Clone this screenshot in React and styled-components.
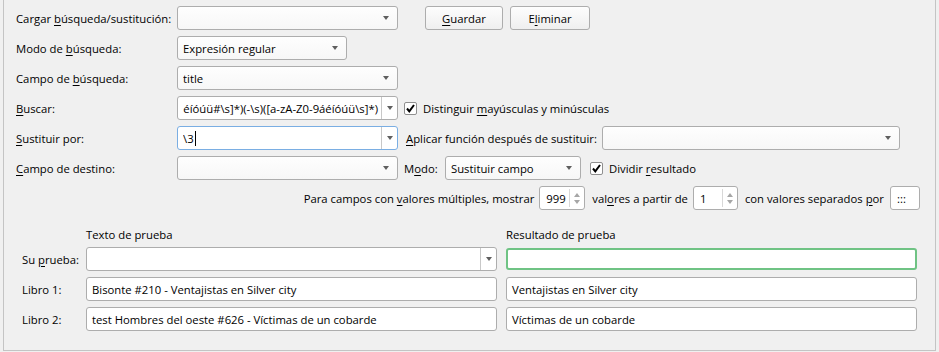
import React from 'react';
import styled, { createGlobalStyle } from 'styled-components';

const GlobalStyle = createGlobalStyle`
  html, body {
    margin: 0;
    padding: 0;
    background: #f0f0f0;
  }
  body {
    font-family: "Open Sans", "Noto Sans", sans-serif;
    font-size: 11.3px;
    color: #000;
  }
`

const Panel = styled.div`
  box-sizing: border-box;
  margin-left: 3px;
  width: 933px;
  height: 351px;
  border: 1px solid #c4c4c4;
  border-top: 0;
  padding: 6px 15px 0 12px;
`

const Row = styled.div`
  display: flex;
  align-items: center;
  height: 24px;
  margin-bottom: 6px;
  justify-content: ${props => props.right ? 'flex-end' : 'flex-start'};
`

const Label = styled.span`
  flex: none;
  width: ${props => props.w ? `${props.w}px` : 'auto'};
  margin-left: ${props => props.ml || 0}px;
  white-space: nowrap;
`

const Combo = styled.div`
  position: relative;
  flex: none;
  box-sizing: border-box;
  width: ${props => props.w ? `${props.w}px` : 'auto'};
  height: 24px;
  margin-left: ${props => props.ml || 0}px;
  border: 1px solid ${props => props.focus ? '#7aaee3' : '#adadad'};
  border-radius: 3px;
  background: ${props => props.editable ? '#fff' : 'linear-gradient(#fefefe, #f7f7f7)'};
  display: flex;
  align-items: center;
  padding-left: 5px;
  padding-right: ${props => props.editable ? 16 : 22}px;
  white-space: nowrap;
`

const ComboText = styled.div`
  flex: 1;
  overflow: hidden;
  display: flex;
  align-items: center;
  justify-content: ${props => props.clipStart ? 'flex-end' : 'flex-start'};
  padding-right: ${props => props.clipStart ? 3 : 0}px;
`

const ArrowBox = styled.div`
  position: absolute;
  right: 0;
  top: 0;
  bottom: 0;
  width: ${props => props.editable ? 15 : 22}px;
  border-left: ${props => props.editable ? '1px solid #c8c8c8' : '0'};
  display: flex;
  align-items: center;
  justify-content: center;
  &::after {
    content: '';
    border-left: 3.5px solid transparent;
    border-right: 3.5px solid transparent;
    border-top: 4px solid #5f5f5f;
  }
`

const Caret = styled.span`
  display: inline-block;
  width: 1px;
  height: 15px;
  background: #000;
  margin-left: 1px;
`

const Button = styled.button`
  flex: none;
  box-sizing: border-box;
  width: ${props => props.w}px;
  height: 24px;
  margin-left: ${props => props.ml || 0}px;
  border: 1px solid #adadad;
  border-radius: 3px;
  background: linear-gradient(#fdfdfd, #efefef);
  font: inherit;
  color: #000;
  padding: 0;
`

const Check = styled.span`
  flex: none;
  box-sizing: border-box;
  width: 13px;
  height: 13px;
  margin-left: ${props => props.ml || 0}px;
  margin-right: 6px;
  border: 1px solid #8f8f8f;
  border-radius: 2px;
  background: #fff;
  display: flex;
  align-items: center;
  justify-content: center;
`

const Spin = styled.div`
  position: relative;
  flex: none;
  box-sizing: border-box;
  width: ${props => props.w}px;
  height: 24px;
  margin: 0 7px 0 5px;
  border: 1px solid #adadad;
  border-radius: 3px;
  background: #fff;
  display: flex;
  align-items: center;
  padding-left: 6px;
`

const SpinArrows = styled.div`
  position: absolute;
  right: 0;
  top: 2px;
  bottom: 2px;
  width: 14px;
  border-left: 1px solid #d8d8d8;
  display: flex;
  flex-direction: column;
  align-items: center;
  justify-content: center;
  gap: 3px;
`

const Tri = styled.span`
  border-left: 3.5px solid transparent;
  border-right: 3.5px solid transparent;
  ${props => props.up ? 'border-bottom' : 'border-top'}: 4px solid #a6a6a6;
`

const Field = styled.div`
  box-sizing: border-box;
  width: ${props => props.w}px;
  height: 24px;
  margin-left: ${props => props.ml || 0}px;
  border: 1px solid #adadad;
  border-radius: 3px;
  background: #fff;
  display: flex;
  align-items: center;
  padding-left: 6px;
  white-space: nowrap;
  overflow: hidden;
`

const TestArea = styled.div`
  margin-top: 16px;
  padding-left: 6px;
  display: grid;
  grid-template-columns: 55px 411px 411px;
  column-gap: 9px;
  row-gap: 6px;
  align-items: center;
`

const Head = styled.div`
  height: 17px;
  line-height: 17px;
  margin-bottom: -2px;
`

const Result = styled.div`
  box-sizing: border-box;
  height: ${props => props.green ? 22 : 24}px;
  border: ${props => props.green ? '2px solid #6fc384' : '1px solid #adadad'};
  border-radius: 3px;
  background: #fff;
  display: flex;
  align-items: center;
  padding-left: 5px;
  white-space: nowrap;
  overflow: hidden;
`

const U = styled.span`
  text-decoration: underline;
  text-underline-offset: 2px;
`

const Tick = () => (
  <svg width="11" height="11" viewBox="0 0 11 11">
    <path d="M2 5.5 L4.3 8.3 L9 2" fill="none" stroke="#000" strokeWidth="2" />
  </svg>
)

const Arrow = ({ editable }) => <ArrowBox editable={editable} />

const regex = '^([a-zA-Z0-9áéíóúü#\\s]*)(-\\s)([a-zA-Z0-9áéíóúü\\s]*)';

const App = () => (
  <>
    <GlobalStyle />
    <Panel>
      <Row>
        <Label w={161}>Cargar <U>b</U>úsqueda/sustitución:</Label>
        <Combo w={221}><Arrow /></Combo>
        <Button w={78} ml={27}><U>G</U>uardar</Button>
        <Button w={80} ml={7}>E<U>l</U>iminar</Button>
      </Row>
      <Row>
        <Label w={161}>Modo de <U>b</U>úsqueda:</Label>
        <Combo w={170}><ComboText>Expresión regular</ComboText><Arrow /></Combo>
      </Row>
      <Row>
        <Label w={161}>Campo de <U>b</U>úsqueda:</Label>
        <Combo w={221}><ComboText>title</ComboText><Arrow /></Combo>
      </Row>
      <Row>
        <Label w={161}><U>B</U>uscar:</Label>
        <Combo w={221} editable><ComboText clipStart><span>{regex}</span></ComboText><Arrow editable /></Combo>
        <Check ml={6}><Tick /></Check>
        <Label>Distinguir <U>m</U>ayúsculas y minúsculas</Label>
      </Row>
      <Row>
        <Label w={161}><U>S</U>ustituir por:</Label>
        <Combo w={221} editable focus><ComboText>\3<Caret /></ComboText><Arrow editable /></Combo>
        <Label w={196} ml={8}><U>A</U>plicar función después de sustituir:</Label>
        <Combo w={298}><Arrow /></Combo>
      </Row>
      <Row>
        <Label w={161}><U>C</U>ampo de destino:</Label>
        <Combo w={221}><Arrow /></Combo>
        <Label w={41} ml={6}>M<U>o</U>do:</Label>
        <Combo w={136}><ComboText>Sustituir campo</ComboText><Arrow /></Combo>
        <Check ml={9}><Tick /></Check>
        <Label>Dividir <U>r</U>esultado</Label>
      </Row>
      <Row right>
        <Label>Para campos con <U>v</U>alores múltiples, mostrar</Label>
        <Spin w={46}>999<SpinArrows><Tri up /><Tri /></SpinArrows></Spin>
        <Label>val<U>o</U>res a partir de</Label>
        <Spin w={45}>1<SpinArrows><Tri up /><Tri /></SpinArrows></Spin>
        <Label>con valores separados <U>p</U>or</Label>
        <Field w={30} ml={6}>:::</Field>
      </Row>
      <TestArea>
        <div />
        <Head>Texto de prueba</Head>
        <Head>Resultado de prueba</Head>
        <Label>Su <U>p</U>rueba:</Label>
        <Combo editable><Arrow editable /></Combo>
        <Result green />
        <Label>Libro 1:</Label>
        <Result>Bisonte #210 - Ventajistas en Silver city</Result>
        <Result>Ventajistas en Silver city</Result>
        <Label>Libro 2:</Label>
        <Result>test Hombres del oeste #626 - Víctimas de un cobarde</Result>
        <Result>Víctimas de un cobarde</Result>
      </TestArea>
    </Panel>
  </>
)

export default App;
